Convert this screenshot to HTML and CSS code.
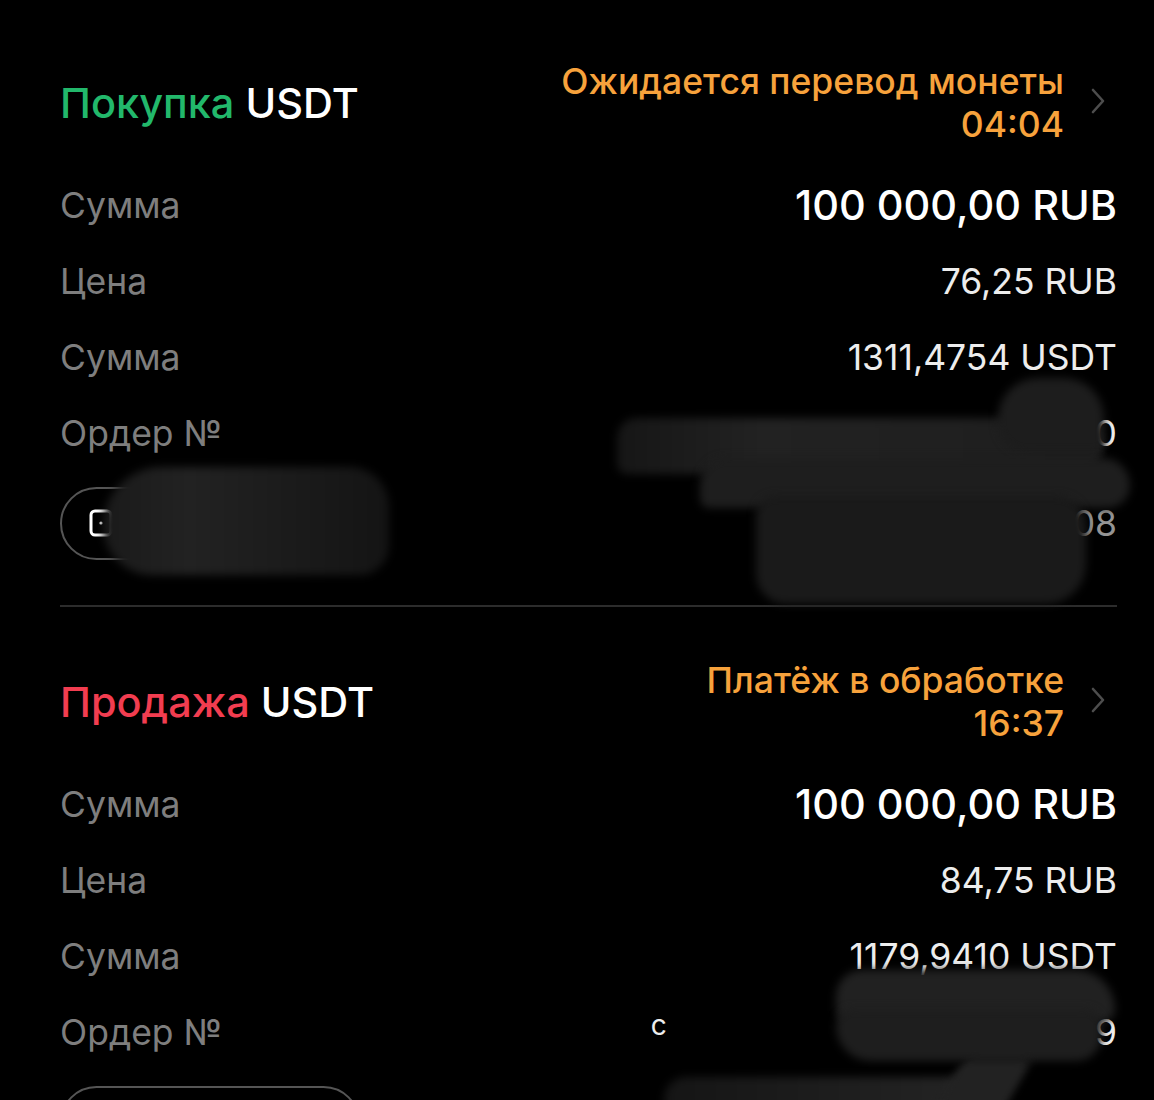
FILE: index.html
```html
<!DOCTYPE html>
<html lang="ru">
<head>
    <meta charset="UTF-8">
    <meta name="viewport" content="width=device-width, initial-scale=1.0">
    <title>Ордера P2P</title>
    <link rel="stylesheet" href="styles.css">
</head>
<body>
    <div class="orders">
        <div class="order">
            <div class="order-head">
                <h2 class="order-title"><span class="buy">Покупка</span> USDT</h2>
                <div class="order-status">
                    <div class="status-text">
                        <p>Ожидается перевод монеты</p>
                        <p>04:04</p>
                    </div>
                    <svg class="chevron" width="14" height="26" viewBox="0 0 14 26"><path d="M2 2 L12 13 L2 24" fill="none" stroke="#4d4d4d" stroke-width="2.6" stroke-linecap="round" stroke-linejoin="round"/></svg>
                </div>
            </div>
            <div class="row"><span class="label">Сумма</span><span class="value big">100 000,00 RUB</span></div>
            <div class="row"><span class="label">Цена</span><span class="value">76,25 RUB</span></div>
            <div class="row"><span class="label">Сумма</span><span class="value">1311,4754 USDT</span></div>
            <div class="row"><span class="label">Ордер №</span><span class="value">420</span></div>
            <div class="pill-row">
                <div class="pill">
                    <svg width="24" height="28" viewBox="0 0 24 28"><rect x="2" y="2" width="20" height="24" rx="4" fill="none" stroke="#fff" stroke-width="3"/><circle cx="12" cy="14" r="1.6" fill="#fff"/></svg>
                </div>
                <span class="value muted">08</span>
            </div>
            <div class="blot band"></div>
            <div class="blot mound"></div>
            <div class="blot mass-top"></div>
            <div class="blot mass-low"></div>
            <div class="blot pill-cover"></div>
        </div>

        <div class="divider"></div>

        <div class="order">
            <div class="order-head">
                <h2 class="order-title"><span class="sell">Продажа</span> USDT</h2>
                <div class="order-status">
                    <div class="status-text">
                        <p>Платёж в обработке</p>
                        <p>16:37</p>
                    </div>
                    <svg class="chevron" width="14" height="26" viewBox="0 0 14 26"><path d="M2 2 L12 13 L2 24" fill="none" stroke="#4d4d4d" stroke-width="2.6" stroke-linecap="round" stroke-linejoin="round"/></svg>
                </div>
            </div>
            <div class="row"><span class="label">Сумма</span><span class="value big">100 000,00 RUB</span></div>
            <div class="row"><span class="label">Цена</span><span class="value">84,75 RUB</span></div>
            <div class="row"><span class="label">Сумма</span><span class="value">1179,9410 USDT</span></div>
            <div class="row"><span class="label">Ордер №</span><span class="value clipped">c</span><span class="value">9</span></div>
            <div class="pill-row">
                <div class="pill"></div>
            </div>
            <div class="blot cloud-top"></div>
            <div class="blot cloud-low"></div>
            <div class="blot arm"></div>
            <div class="blot slash"></div>
        </div>
    </div>
</body>
</html>
```

FILE: styles.css
```css
* {
    margin: 0;
    padding: 0;
    box-sizing: border-box;
}

body {
    font-family: 'Inter', 'Roboto', sans-serif;
    background: #000;
    color: #fff;
    overflow: hidden;
    height: 1100px;
}

.orders {
    padding: 60px 37px 0 60px;
}

.order {
    position: relative;
}

.order-head {
    display: flex;
    justify-content: space-between;
    align-items: center;
    margin-bottom: 21px;
}

.order-title {
    font-size: 41.5px;
    font-weight: 500;
}

.buy {
    color: #22b86b;
}

.sell {
    color: #f23d50;
}

.order-status {
    display: flex;
    align-items: center;
    gap: 27px;
}

.status-text {
    text-align: right;
    color: #f7a23c;
    font-size: 35.5px;
    font-weight: 500;
    line-height: 43px;
}

.chevron {
    margin-right: 12px;
    margin-top: -4px;
}

.row {
    display: flex;
    justify-content: space-between;
    align-items: center;
    height: 76px;
}

.label {
    color: #7e7e7e;
    font-size: 35.5px;
}

.value {
    font-size: 35.5px;
    color: #ededed;
}

.value.big {
    font-size: 41.5px;
    font-weight: 500;
    color: #fff;
}

.value.muted {
    color: #949494;
}

.value.clipped {
    font-size: 28px;
    margin-top: -14px;
}

.pill-row {
    display: flex;
    justify-content: space-between;
    align-items: center;
    height: 104px;
}

.pill {
    display: flex;
    align-items: center;
    width: 300px;
    height: 73px;
    border: 2px solid #555;
    border-radius: 37px;
    padding-left: 27px;
}

.divider {
    height: 2px;
    background: #2c2c2c;
    margin: 30px 0 52px;
}

/* redaction smudges painted over the order numbers */
.blot {
    position: absolute;
    background: #1f1f1f;
    filter: blur(4px);
}

.band {
    left: 557px;
    top: 358px;
    width: 486px;
    height: 56px;
    border-radius: 20px 26px 26px 10px;
    background: linear-gradient(to right, #161616, #222 30%, #1e1e1e);
}

.mound {
    left: 938px;
    top: 318px;
    width: 106px;
    height: 74px;
    border-radius: 40px 40px 10px 30px;
    background: #1d1d1d;
}

.mass-top {
    left: 640px;
    top: 398px;
    width: 430px;
    height: 50px;
    border-radius: 30px 30px 25px 10px;
    background: #1e1e1e;
}

.mass-low {
    left: 696px;
    top: 436px;
    width: 330px;
    height: 108px;
    border-radius: 20px 30px 40px 30px;
    background: #1a1a1a;
}

.pill-cover {
    left: 43px;
    top: 407px;
    width: 286px;
    height: 108px;
    border-radius: 60px 40px 30px 50px;
    background: linear-gradient(to right, #1a1a1a, #222 30%, #141414);
}

.cloud-top {
    left: 776px;
    top: 311px;
    width: 279px;
    height: 52px;
    border-radius: 40px 60px 20px 20px;
    background: #212121;
}

.cloud-low {
    left: 776px;
    top: 350px;
    width: 266px;
    height: 52px;
    border-radius: 20px 20px 30px 40px;
    background: #1e1e1e;
}

.arm {
    left: 604px;
    top: 418px;
    width: 330px;
    height: 44px;
    border-radius: 30px 10px 10px 30px;
    background: linear-gradient(to right, #151515, #252525);
}

.slash {
    left: 880px;
    top: 400px;
    width: 70px;
    height: 80px;
    border-radius: 10px;
    background: #222;
    transform: skewX(-30deg);
}
```
